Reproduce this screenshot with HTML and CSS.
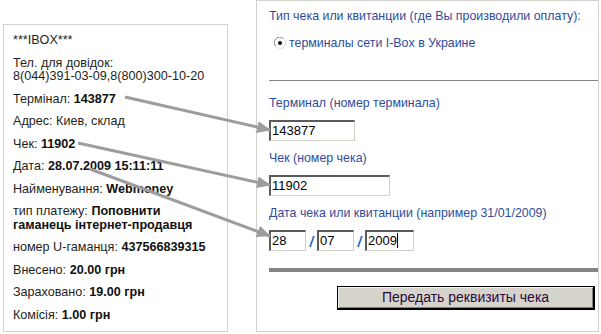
FILE: index.html
```html
<!DOCTYPE html>
<html>
<head>
<meta charset="utf-8">
<link rel="stylesheet" href="styles.css">
</head>
<body>
<div class="page">
  <div class="receipt">
    <p>***IBOX***</p>
    <p>Тел. для довідок:<br>8(044)391-03-09,8(800)300-10-20</p>
    <p>Термінал: <b>143877</b></p>
    <p>Адрес: Киев, склад</p>
    <p>Чек: <b>11902</b></p>
    <p>Дата: <b>28.07.2009 15:11:11</b></p>
    <p>Найменування: <b>Webmoney</b></p>
    <p>тип платежу: <b>Поповнити<br>гаманець інтернет-продавця</b></p>
    <p>номер U-гаманця: <b>437566839315</b></p>
    <p>Внесено: <b>20.00 грн</b></p>
    <p>Зараховано: <b>19.00 грн</b></p>
    <p>Комісія: <b>1.00 грн</b></p>
  </div>
  <div class="form">
    <div class="title">Тип чека или квитанции (где Вы производили оплату):</div>
    <div class="radio-row">
      <svg class="radio" width="12" height="12" viewBox="0 0 12 12">
        <path d="M9.5 1.8 A5.2 5.2 0 0 0 1.8 9.5" fill="none" stroke="#808080" stroke-width="1"/>
        <path d="M2.5 9.9 A5.2 5.2 0 0 0 10 2.3" fill="none" stroke="#e0ddd6" stroke-width="1"/>
        <circle cx="6" cy="6" r="4.3" fill="#fff"/>
        <circle cx="6" cy="6" r="2" fill="#000"/>
      </svg>
      <span>терминалы сети I-Box в Украине</span>
    </div>
    <div class="rule thin"></div>
    <div class="label">Терминал (номер терминала)</div>
    <div class="field w1">143877</div>
    <div class="label">Чек (номер чека)</div>
    <div class="field w2">11902</div>
    <div class="label">Дата чека или квитанции (например 31/01/2009)</div>
    <div class="date-row">
      <div class="field d1">28</div>
      <span class="slash">/</span>
      <div class="field d2">07</div>
      <span class="slash">/</span>
      <div class="field d3">2009<span class="caret"></span></div>
    </div>
    <div class="rule thick"></div>
    <div class="actions">
      <div class="button">Передать реквизиты чека</div>
    </div>
  </div>
</div>
<svg class="arrows" width="601" height="334" viewBox="0 0 601 334">
  <defs>
    <marker id="ah" markerUnits="userSpaceOnUse" markerWidth="14" markerHeight="12" refX="13" refY="6" orient="auto">
      <path d="M0 0 L14 6 L0 12 Z" fill="#9d9d9d"/>
    </marker>
  </defs>
  <line x1="125" y1="97" x2="270" y2="130" stroke="#9d9d9d" stroke-width="3" marker-end="url(#ah)"/>
  <line x1="78" y1="143" x2="270" y2="185" stroke="#9d9d9d" stroke-width="3" marker-end="url(#ah)"/>
  <line x1="90" y1="169" x2="270" y2="236" stroke="#9d9d9d" stroke-width="3" marker-end="url(#ah)"/>
</svg>
</body>
</html>
```
FILE: styles.css
```css
html, body {
  margin: 0;
  padding: 0;
  background: #fff;
}
body {
  width: 601px;
  height: 334px;
  overflow: hidden;
  position: relative;
  font-family: "Liberation Sans", Arial, sans-serif;
}
.page {
  display: flex;
  align-items: flex-start;
}
.receipt {
  margin-left: 3px;
  margin-top: 24px;
  width: 214px;
  height: 297px;
  border: 1px solid #d4d2cc;
  padding: 9px 0 0 9px;
  color: #1e1e1e;
  font-size: 12.6px;
  line-height: 13.5px;
}
.receipt p {
  margin: 0 0 9px 0;
  white-space: nowrap;
}
.receipt b {
  color: #111;
}
.form {
  margin-left: 28px;
  width: 329px;
  height: 330px;
  border: 1px solid #d4d2cc;
  padding-left: 12px;
  font-size: 12.4px;
  line-height: 14px;
  color: #2f4c9c;
}
.title {
  margin-top: 8px;
}
.radio-row {
  display: flex;
  align-items: center;
  margin-top: 13px;
  margin-left: 5px;
  height: 14px;
}
.radio {
  margin-right: 3px;
}
.rule {
  background: #858585;
}
.rule.thin {
  height: 1px;
  margin-top: 30px;
}
.label {
  margin-top: 15px;
}
.field {
  box-sizing: border-box;
  height: 21px;
  margin-top: 10px;
  border: 1px solid #d4d0c8;
  border-top: 2px solid #5a5a5a;
  border-left: 2px solid #5a5a5a;
  color: #000;
  font-size: 13px;
  line-height: 18px;
  padding-left: 1px;
  background: #fff;
}
.field + .label {
  margin-top: 10px;
}
.w1 { width: 86px; }
.w2 { width: 121px; }
.date-row {
  display: flex;
  align-items: flex-end;
  margin-top: 10px;
}
.date-row .field {
  margin-top: 0;
}
.d1 { width: 37px; }
.d2 { width: 37px; }
.d3 { width: 49px; }
.slash {
  color: #1d5fc8;
  font-weight: bold;
  font-size: 14px;
  font-style: italic;
  width: 11px;
  text-align: center;
  line-height: 18px;
}
.caret {
  display: inline-block;
  width: 1px;
  height: 15px;
  background: #000;
  vertical-align: -3px;
}
.rule.thick {
  height: 4px;
  margin-top: 17px;
}
.actions {
  display: flex;
  justify-content: flex-end;
  margin-top: 14px;
  padding-right: 3px;
}
.button {
  box-sizing: border-box;
  width: 258px;
  height: 24px;
  background: #d6d3cd;
  border: 1px solid #000;
  border-right-width: 2px;
  border-bottom-width: 2px;
  box-shadow: inset 1px 1px 0 #f4f2ee, inset -1px -1px 0 #808080;
  color: #2a0a38;
  font-size: 14px;
  line-height: 21px;
  text-align: center;
}
.arrows {
  position: absolute;
  left: 0;
  top: 0;
  pointer-events: none;
}
```
